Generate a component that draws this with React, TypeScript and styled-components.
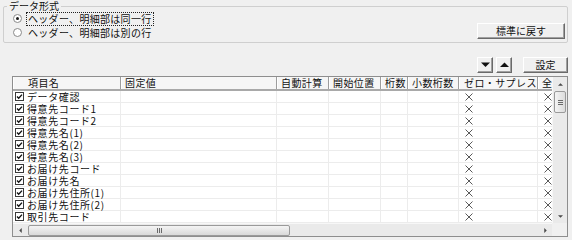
import React from "react";
import styled, { createGlobalStyle } from "styled-components";

const GlobalStyle = createGlobalStyle`
  html, body {
    margin: 0;
    padding: 0;
    background: #f0f0f0;
  }
  body {
    font-family: "Noto Sans CJK JP", "Noto Sans", sans-serif;
    font-size: 10px;
    color: #111;
  }
`;

const Page = styled.div`
  width: 572px;
  height: 240px;
  box-sizing: border-box;
  padding: 0 4px 0 3px;
  display: flex;
  flex-direction: column;
`;

const GroupBox = styled.fieldset`
  margin: 0;
  min-width: 0;
  padding: 0 2px 3px 9px;
  border: 1px solid #cfcfcf;
  border-radius: 2px;
  display: flex;
  align-items: flex-end;
  justify-content: space-between;
`;

const Legend = styled.legend`
  margin-left: -6px;
  padding: 0 2px;
  font-size: 10px;
  line-height: 12px;
  height: 12px;
`;

const RadioList = styled.div`
  display: flex;
  flex-direction: column;
  gap: 1px;
`;

const RadioRow = styled.label`
  display: flex;
  align-items: center;
  gap: 4px;
  height: 13px;
`;

const RadioCircle = styled.span<{ $on?: boolean }>`
  width: 9px;
  height: 9px;
  box-sizing: border-box;
  border-radius: 50%;
  border: 1px solid #8a8a8a;
  background: #fff;
  display: flex;
  align-items: center;
  justify-content: center;
  &::after {
    content: "";
    width: 3px;
    height: 3px;
    border-radius: 50%;
    background: ${(p) => (p.$on ? "#1a1a1a" : "transparent")};
  }
`;

const RadioText = styled.span<{ $focus?: boolean }>`
  line-height: 12px;
  padding: 0 1px;
  letter-spacing: 0.3px;
  border: 1px dotted ${(p) => (p.$focus ? "#222" : "transparent")};
`;

const Button = styled.button<{ $w: number }>`
  width: ${(p) => p.$w}px;
  height: 16px;
  padding: 0;
  margin: 0;
  font-family: inherit;
  font-size: 10px;
  line-height: 14px;
  color: #111;
  background: #f0f0f0;
  border: 1px solid;
  border-color: #ffffff #6a6a6a #6a6a6a #ffffff;
  box-shadow: inset -1px -1px 0 #a0a0a0;
  display: flex;
  align-items: center;
  justify-content: center;
`;

const Toolbar = styled.div`
  display: flex;
  justify-content: flex-end;
  align-items: center;
  gap: 3px;
  margin-top: 14px;
`;

const Spacer = styled.span`
  width: 5px;
`;

const Frame = styled.div`
  margin: 3px 0 0 9px;
  height: 161px;
  box-sizing: border-box;
  border: 1px solid #8e8e8e;
  background: #fff;
  display: grid;
  grid-template-columns: 1fr 15px;
  grid-template-rows: 1fr 13px;
  overflow: hidden;
`;

const Main = styled.div`
  overflow: hidden;
`;

const COLS = "108px 156px 52px 52px 27px 51px 79px 40px";

const HeaderRow = styled.div`
  display: grid;
  grid-template-columns: ${COLS};
  height: 14px;
  box-sizing: border-box;
  background: #f6f6f6;
  border-bottom: 2px solid #a9a9a9;
`;

const HeadCell = styled.div<{ $indent?: number }>`
  box-sizing: border-box;
  border-right: 1px solid #9d9d9d;
  box-shadow: inset 1px 0 0 #ffffff;
  padding-left: ${(p) => p.$indent ?? 4}px;
  line-height: 12px;
  white-space: nowrap;
  letter-spacing: 0.4px;
`;

const Row = styled.div`
  display: grid;
  grid-template-columns: ${COLS};
  height: 12px;
`;

const Cell = styled.div<{ $pad?: number }>`
  box-sizing: border-box;
  height: 12px;
  border-right: 1px solid #ececec;
  border-bottom: 1px solid #ececec;
  padding-left: ${(p) => p.$pad ?? 3}px;
  display: flex;
  align-items: center;
  gap: 3px;
  white-space: nowrap;
  line-height: 11px;
`;

const NameText = styled.span`
  letter-spacing: 0.6px;
  line-height: 11px;
`;

const VScroll = styled.div`
  background: #eaeaea;
  border-left: 1px solid #f7f7f7;
  display: flex;
  flex-direction: column;
  align-items: center;
`;

const HScroll = styled.div`
  background: #eaeaea;
  border-top: 1px solid #f7f7f7;
  display: flex;
  align-items: center;
`;

const Corner = styled.div`
  background: #f0f0f0;
`;

const ArrowBox = styled.div<{ $w: number; $h: number }>`
  width: ${(p) => p.$w}px;
  height: ${(p) => p.$h}px;
  display: flex;
  align-items: center;
  justify-content: center;
  flex: none;
`;

const Thumb = styled.div<{ $vertical?: boolean }>`
  box-sizing: border-box;
  border: 1px solid #9a9a9a;
  border-radius: 2px;
  background: ${(p) =>
    p.$vertical
      ? "linear-gradient(90deg, #f4f4f4, #dcdcdc)"
      : "linear-gradient(180deg, #f4f4f4, #d9d9d9)"};
  display: flex;
  align-items: center;
  justify-content: center;
  flex: none;
  width: ${(p) => (p.$vertical ? "12px" : "262px")};
  height: ${(p) => (p.$vertical ? "22px" : "11px")};
`;

const Track = styled.div`
  flex: 1;
`;

const Check = () => (
  <svg width="9" height="9" viewBox="0 0 9 9">
    <rect x="0.5" y="0.5" width="8" height="8" fill="#fff" stroke="#3a3a3a" />
    <path d="M2 4.4 L3.7 6.2 L7 2.6" fill="none" stroke="#111" strokeWidth="1.4" />
  </svg>
);

const Cross = () => (
  <svg width="8" height="8" viewBox="0 0 8 8">
    <path d="M0.5 0.5 L7.5 7.5 M7.5 0.5 L0.5 7.5" stroke="#5a5a5a" strokeWidth="1" />
  </svg>
);

const Tri = ({ dir, size = 5, color = "#4a4a4a" }: { dir: "up" | "down" | "left" | "right"; size?: number; color?: string }) => {
  const pts: Record<string, string> = {
    up: "0,4 4,0 8,4",
    down: "0,0 8,0 4,4",
    left: "4,0 4,8 0,4",
    right: "0,0 0,8 4,4",
  };
  const horiz = dir === "left" || dir === "right";
  return (
    <svg
      width={horiz ? size * 0.6 : size}
      height={horiz ? size : size * 0.6}
      viewBox={horiz ? "0 0 4 8" : "0 0 8 4"}
    >
      <polygon points={pts[dir]} fill={color} />
    </svg>
  );
};

const Grip = ({ vertical }: { vertical?: boolean }) =>
  vertical ? (
    <svg width="5" height="5" viewBox="0 0 5 5">
      <path d="M0 0.5 H5 M0 2.5 H5 M0 4.5 H5" stroke="#6a6a6a" strokeWidth="1" />
    </svg>
  ) : (
    <svg width="5" height="5" viewBox="0 0 5 5">
      <path d="M0.5 0 V5 M2.5 0 V5 M4.5 0 V5" stroke="#6a6a6a" strokeWidth="1" />
    </svg>
  );

const headers = [
  { label: "項目名", indent: 15 },
  { label: "固定値" },
  { label: "自動計算" },
  { label: "開始位置" },
  { label: "桁数" },
  { label: "小数桁数" },
  { label: "ゼロ・サプレス", indent: 5 },
  { label: "全" },
];

const items = [
  "データ確認",
  "得意先コード1",
  "得意先コード2",
  "得意先名(1)",
  "得意先名(2)",
  "得意先名(3)",
  "お届け先コード",
  "お届け先名",
  "お届け先住所(1)",
  "お届け先住所(2)",
  "取引先コード",
];

const App = () => {
  return (
    <Page>
      <GlobalStyle />
      <GroupBox>
        <Legend>データ形式</Legend>
        <RadioList>
          <RadioRow>
            <RadioCircle $on />
            <RadioText $focus>ヘッダー、明細部は同一行</RadioText>
          </RadioRow>
          <RadioRow>
            <RadioCircle />
            <RadioText>ヘッダー、明細部は別の行</RadioText>
          </RadioRow>
        </RadioList>
        <Button $w={88}>標準に戻す</Button>
      </GroupBox>

      <Toolbar>
        <Button $w={16}>
          <Tri dir="down" size={9} color="#111" />
        </Button>
        <Button $w={16}>
          <Tri dir="up" size={9} color="#111" />
        </Button>
        <Spacer />
        <Button $w={45}>設定</Button>
      </Toolbar>

      <Frame>
        <Main>
          <HeaderRow>
            {headers.map((h) => (
              <HeadCell key={h.label} $indent={h.indent}>
                {h.label}
              </HeadCell>
            ))}
          </HeaderRow>
          {items.map((name) => (
            <Row key={name}>
              <Cell $pad={2}>
                <Check />
                <NameText>{name}</NameText>
              </Cell>
              <Cell />
              <Cell />
              <Cell />
              <Cell />
              <Cell />
              <Cell $pad={6}>
                <Cross />
              </Cell>
              <Cell $pad={6}>
                <Cross />
              </Cell>
            </Row>
          ))}
        </Main>
        <VScroll>
          <ArrowBox $w={15} $h={14}>
            <Tri dir="up" />
          </ArrowBox>
          <Thumb $vertical>
            <Grip vertical />
          </Thumb>
          <Track />
          <ArrowBox $w={15} $h={13}>
            <Tri dir="down" />
          </ArrowBox>
        </VScroll>
        <HScroll>
          <ArrowBox $w={15} $h={12}>
            <Tri dir="left" />
          </ArrowBox>
          <Thumb>
            <Grip />
          </Thumb>
          <Track />
          <ArrowBox $w={13} $h={12}>
            <Tri dir="right" />
          </ArrowBox>
        </HScroll>
        <Corner />
      </Frame>
    </Page>
  );
};

export default App;
